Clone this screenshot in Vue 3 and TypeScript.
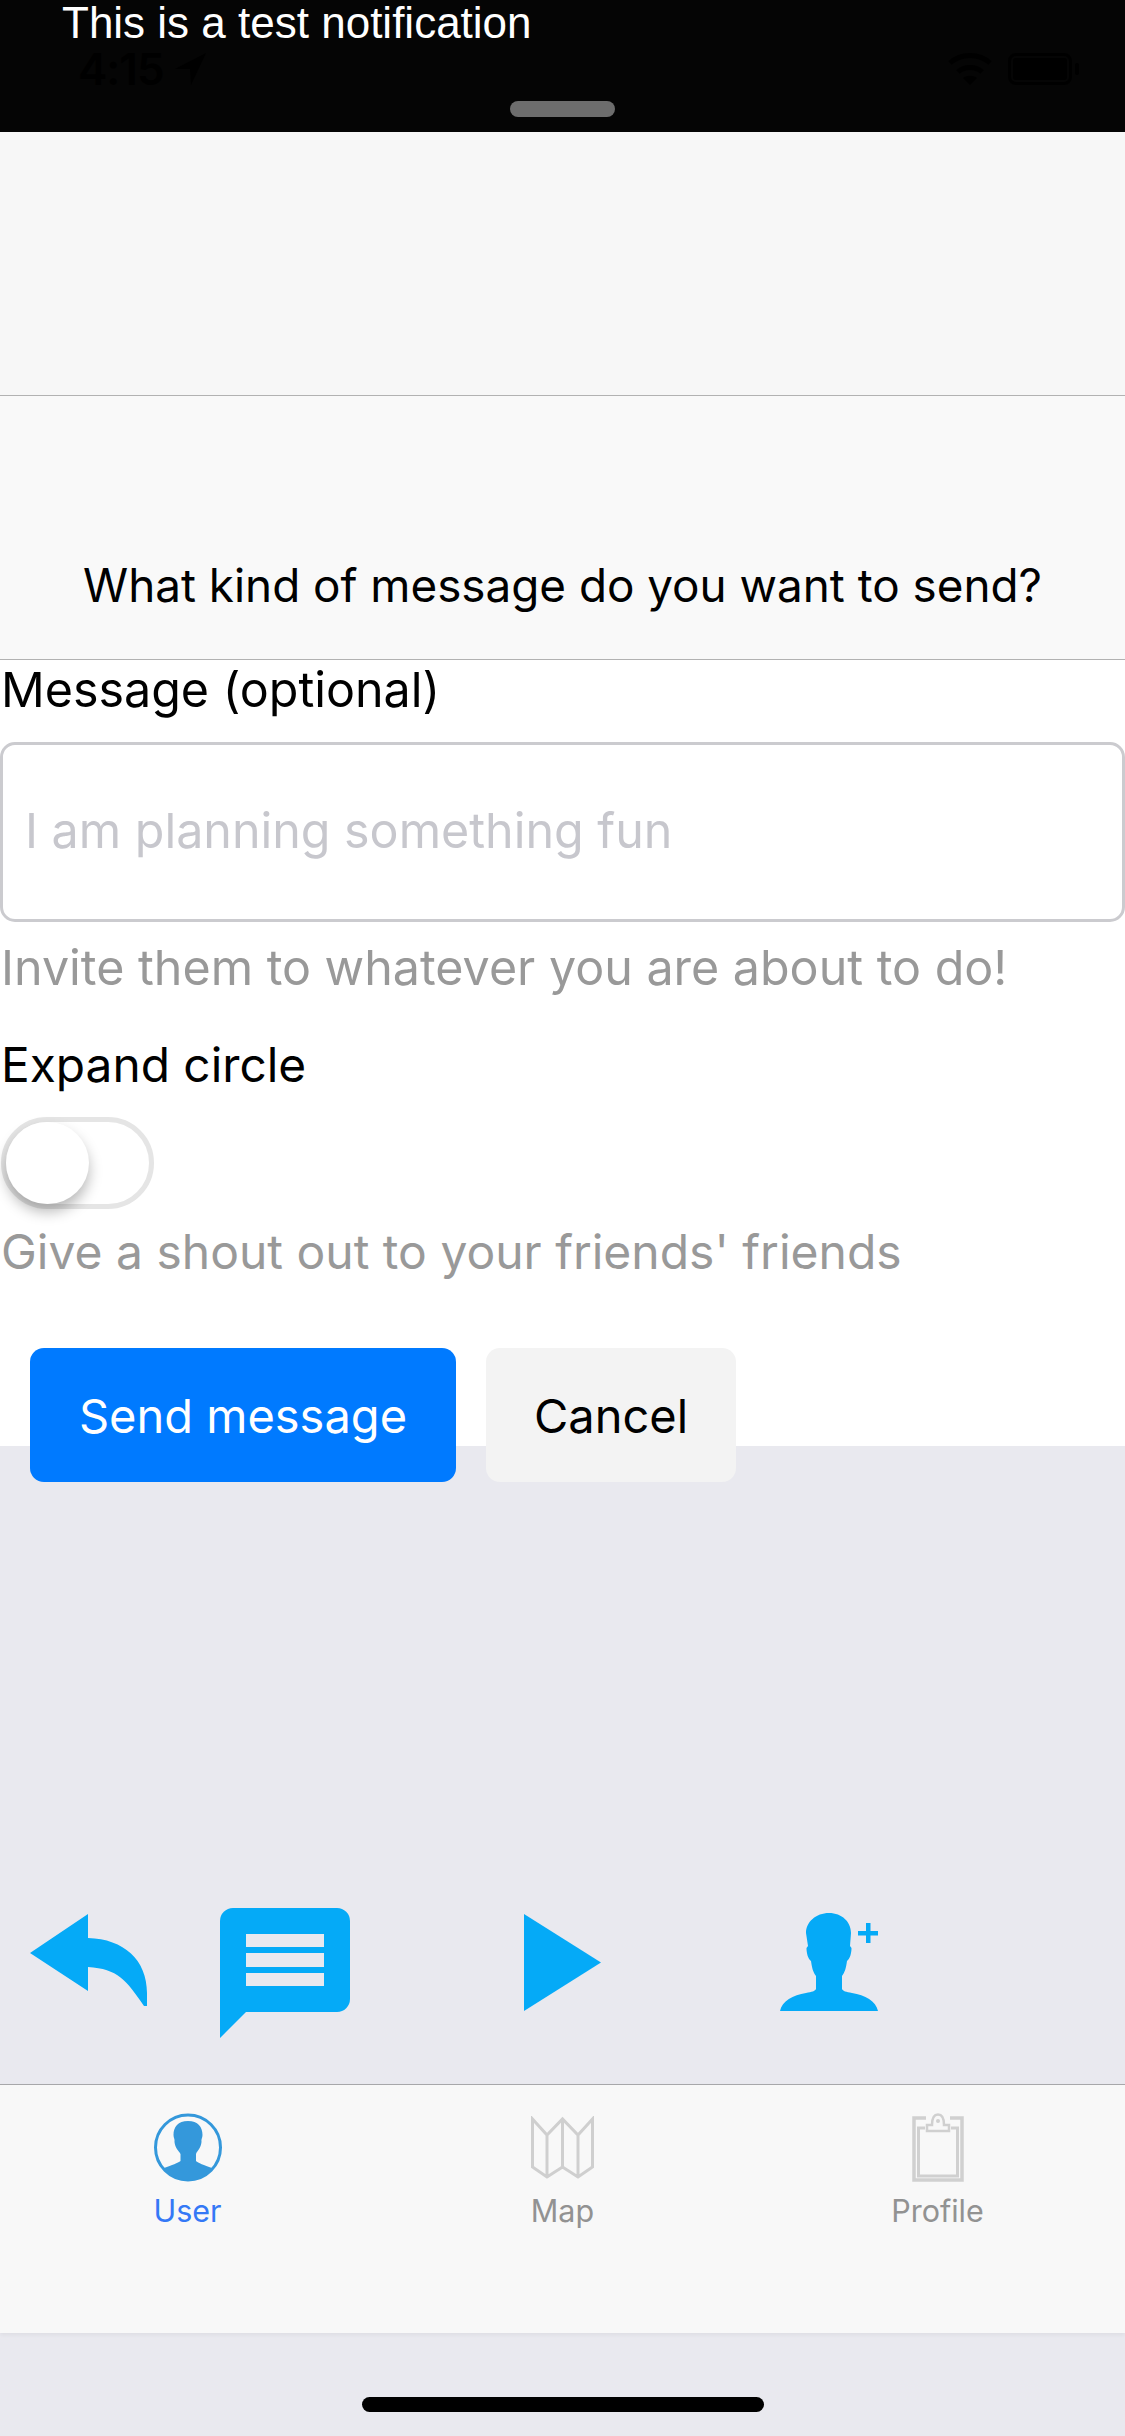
<script setup lang="ts">
interface Tab {
  label: string;
  active?: boolean;
}

const tabs: Tab[] = [
  { label: 'User', active: true },
  { label: 'Map' },
  { label: 'Profile' },
];
</script>

<template>
  <div class="screen">
    <div class="banner">
      <div class="banner-text">This is a test notification</div>
      <div class="status">
        <span class="time">4:15</span>
        <svg class="loc" width="31" height="32" viewBox="0 0 31 32"><path d="M31 0 L0 16 H15 L16 32 Z" fill="#000" /></svg>
        <span class="status-right">
          <svg width="44" height="32" viewBox="0 0 44 32" fill="none" stroke="#000" stroke-width="5">
            <path d="M2 10 C13 0 31 0 42 10" />
            <path d="M10 19 C16 13 28 13 34 19" />
            <path d="M15 25 C19 22 25 22 29 25 L22 32 Z" fill="#000" stroke="none" />
          </svg>
          <span class="battery"><span class="battery-fill"></span></span>
        </span>
      </div>
      <div class="handle"></div>
    </div>

    <div class="nav"></div>
    <div class="prompt">What kind of message do you want to send?</div>

    <div class="form">
      <div class="label">Message (optional)</div>
      <input class="input" type="text" placeholder="I am planning something fun" />
      <div class="hint">Invite them to whatever you are about to do!</div>
      <div class="label expand">Expand circle</div>
      <div class="toggle"><div class="knob"></div></div>
      <div class="hint shout">Give a shout out to your friends' friends</div>
      <div class="buttons">
        <button class="btn primary">Send message</button>
        <button class="btn">Cancel</button>
      </div>
    </div>

    <div class="actions">
      <svg class="reply" width="117" height="92" viewBox="0 0 117 92">
        <path d="M0 39 L58 0 V24 C94 25 117 46 117 79 V92 H114 C96 66 88 55 58 53 V77 Z" />
      </svg>
      <svg class="chat" width="130" height="130" viewBox="0 0 130 130">
        <path fill-rule="evenodd" d="M13 0 H117 A13 13 0 0 1 130 13 V91 A13 13 0 0 1 117 104 H26 L0 130 V13 A13 13 0 0 1 13 0 Z M26 26 V39 H104 V26 Z M26 45 V59 H104 V45 Z M26 65 V78 H104 V65 Z" />
      </svg>
      <svg class="play" width="77" height="97" viewBox="0 0 77 97">
        <path d="M0 0 L77 48.5 L0 97 Z" />
      </svg>
      <svg class="add" width="98" height="98" viewBox="0 0 98 98">
        <path d="M49 0 C62 0 71 9 71 20 L70 33 L71.5 35 C71.5 40 70 46 67 48 C66 55 65 59 62 63 V76 C63 78 66 79 72 80 C85 82 96 88 98 98 H0 C2 88 13 82 26 80 C32 79 35 78 36 76 V63 C33 59 32 55 31 48 C28 46 26.5 40 26.5 35 L28 33 L26 20 C26 9 36 0 49 0 Z" />
        <path d="M86 10 H90.5 V18 H98 V22.5 H90.5 V30 H86 V22.5 H78 V18 H86 Z" />
      </svg>
    </div>

    <div class="tabbar">
      <div v-for="tab in tabs" :key="tab.label" class="tab" :class="{ active: tab.active }">
        <svg v-if="tab.label === 'User'" width="68" height="69" viewBox="0 0 68 69">
          <circle cx="34" cy="34.5" r="32.5" fill="none" stroke="#3498db" stroke-width="3" />
          <path fill="#3498db" d="M34 8 C44 8 48.5 14 48.5 22 C48.5 25 47 26 47.5 29 C47 35 43 38 42 41 V48 C44 50 50 52 58 55 C52 63 43 67.5 34 67.5 C25 67.5 16 63 10 55 C18 52 24 50 26.5 48 V41 C25 38 21 35 20.5 29 C21 26 19.5 25 19.5 22 C19.5 14 24 8 34 8 Z" />
        </svg>
        <svg v-else-if="tab.label === 'Map'" class="map-icon" width="63" height="63" viewBox="0 0 63 63" fill="none" stroke="#cfcfcf" stroke-width="3">
          <path d="M1.5 3 L16 19 L31.5 3 L47 19 L61.5 3 V51 L47 61 L31.5 51 L16 61 L1.5 51 Z M16 19 V61 M31.5 3 V51 M47 19 V61" />
        </svg>
        <svg v-else width="52" height="69" viewBox="0 0 52 69" fill="none" stroke="#d0d0d0">
          <path stroke-width="3.5" d="M14 5 H2 V67 H50 V5 H38" />
          <path stroke-width="3" d="M13 15 H6.5 V63 H45.5 V15 H39" />
          <path stroke-width="2.5" d="M15 18 V12 H20 C20 6 22 1.5 26 1.5 C30 1.5 32 6 32 12 H37 V18 Z" />
          <circle cx="26" cy="8" r="2" fill="#d0d0d0" stroke="none" />
        </svg>
        <span class="tab-label">{{ tab.label }}</span>
      </div>
    </div>

    <div class="home"><div class="home-bar"></div></div>
  </div>
</template>

<style scoped>
.screen {
  width: 1125px;
  height: 2436px;
  background: #e9e9ef;
  font-family: Inter, "Noto Sans", sans-serif;
  color: #000;
  overflow: hidden;
  display: flex;
  flex-direction: column;
}

.banner {
  height: 132px;
  background: #050505;
  padding-left: 62px;
  position: relative;
  box-sizing: border-box;
}

.banner-text {
  font-family: "Liberation Sans", Arial, sans-serif;
  font-size: 44px;
  line-height: 46px;
  color: #fff;
}

.status {
  display: flex;
  align-items: center;
  padding-left: 16px;
  padding-right: 53px;
  margin-top: 1px;
  height: 44px;
}

.time {
  font-size: 44px;
  line-height: 34px;
  font-weight: 600;
  letter-spacing: -1px;
  color: #000;
}

.loc {
  margin-left: 11px;
}

.status-right {
  margin-left: auto;
  display: flex;
  align-items: center;
  gap: 16px;
}

.battery {
  width: 64px;
  height: 32px;
  border: 3px solid #000;
  border-radius: 8px;
  box-sizing: border-box;
  padding: 2px;
  display: block;
  position: relative;
}

.battery::after {
  content: '';
  position: absolute;
  right: -10px;
  top: 7px;
  width: 4px;
  height: 12px;
  border-radius: 2px;
  background: #000;
}

.battery-fill {
  display: block;
  height: 100%;
  background: #000;
  border-radius: 3px;
}

.handle {
  position: absolute;
  left: 510px;
  top: 101px;
  width: 105px;
  height: 16px;
  border-radius: 8px;
  background: #6d6d6d;
}

.nav {
  height: 263px;
  background: #f7f7f7;
  border-bottom: 1px solid #b2b2b2;
}

.prompt {
  height: 264px;
  background: #f9f9f9;
  border-bottom: 1px solid #b2b2b2;
  box-sizing: border-box;
  padding-top: 160px;
  text-align: center;
  font-size: 45.8px;
  line-height: 60px;
}

.form {
  height: 786px;
  background: #fff;
  flex: none;
}

.label {
  font-size: 48.4px;
  line-height: 60px;
  padding-left: 1px;
}

.input {
  display: block;
  width: 100%;
  height: 180px;
  margin-top: 22px;
  box-sizing: border-box;
  border: 3px solid #cbcbcf;
  border-radius: 15px;
  padding: 0 22px 4px;
  font-family: inherit;
  font-size: 48.4px;
  background: #fff;
  outline: none;
}

.input::placeholder {
  color: #c7c7cd;
  opacity: 1;
}

.hint {
  font-size: 48.4px;
  line-height: 60px;
  color: #999;
  padding-left: 1px;
  margin-top: 16px;
}

.expand {
  margin-top: 37px;
  font-size: 47.8px;
}

.toggle {
  width: 153px;
  height: 92px;
  margin-top: 22px;
  margin-left: 1px;
  box-sizing: border-box;
  border: 5px solid #e5e5e5;
  border-radius: 46px;
}

.knob {
  width: 83px;
  height: 82px;
  border-radius: 50%;
  background: #fff;
  box-shadow: 0 8px 14px rgba(0, 0, 0, 0.28);
}

.shout {
  margin-top: 13px;
  font-size: 48px;
}

.buttons {
  display: flex;
  gap: 30px;
  padding-left: 30px;
  margin-top: 66px;
}

.btn {
  height: 134px;
  width: 250px;
  border: none;
  border-radius: 14px;
  background: #f3f3f3;
  font-family: inherit;
  font-size: 47px;
  color: #000;
  padding: 0;
}

.btn.primary {
  width: 426px;
  background: #007aff;
  color: #fff;
}

.actions {
  height: 638px;
  flex: none;
  box-sizing: border-box;
  padding: 462px 0 0 30px;
  display: flex;
  align-items: flex-start;
  fill: #05aaf7;
}

.reply {
  margin-top: 6px;
}

.chat {
  margin-left: 73px;
}

.play {
  margin-left: 174px;
  margin-top: 6px;
}

.add {
  margin-left: 179px;
  margin-top: 5px;
}

.tabbar {
  height: 249px;
  flex: none;
  box-sizing: border-box;
  border-top: 1px solid #a7a7aa;
  background: #f8f8f8;
  display: flex;
  padding-top: 28px;
  box-shadow: 0 2px 4px rgba(0, 0, 0, 0.05);
}

.tab {
  flex: 1;
  display: flex;
  flex-direction: column;
  align-items: center;
  height: 116px;
  justify-content: space-between;
}

.map-icon {
  margin-top: 3px;
}

.tab-label {
  font-size: 30.5px;
  line-height: 36px;
  color: #929292;
}

.tab.active .tab-label {
  color: #3478f6;
}

.home {
  flex: 1;
  padding-top: 64px;
  display: flex;
  justify-content: center;
}

.home-bar {
  width: 402px;
  height: 15px;
  border-radius: 8px;
  background: #000;
}
</style>
